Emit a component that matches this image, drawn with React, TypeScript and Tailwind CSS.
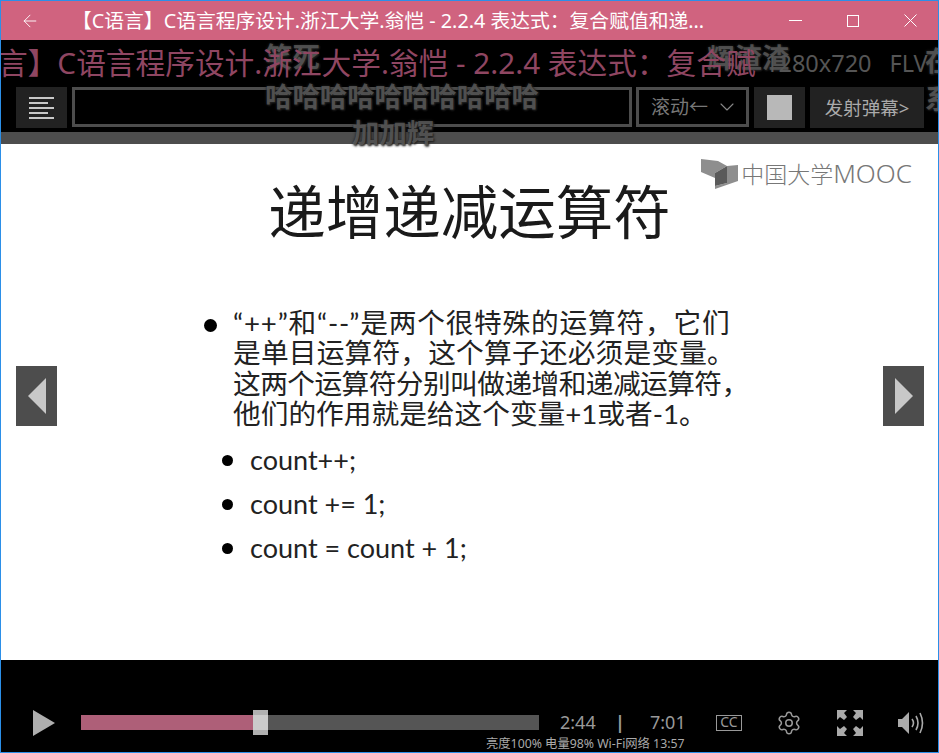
import React from 'react';
import { ArrowLeft, ChevronDown, Settings } from 'lucide-react';

const cjk = "font-['Noto_Sans','Noto_Sans_CJK_SC',sans-serif]";
const danmaku =
  "absolute whitespace-nowrap text-[27.4px] leading-none font-bold text-[#666]/70 [text-shadow:0_0_3px_#222,1px_1px_2px_#222]";

function Bullet({ children }: { children: React.ReactNode }) {
  return (
    <li className="flex items-center h-[44px]">
      <span className="w-[11px] h-[11px] rounded-full bg-black shrink-0 mr-[17px]" />
      <span className="font-['Lato',sans-serif] text-[27px] text-[#222]">{children}</span>
    </li>
  );
}

function SlideArrow({ right }: { right?: boolean }) {
  return (
    <div className={`absolute top-[222px] w-[41px] h-[60px] bg-[#4d4d4d] flex items-center justify-center ${right ? 'right-[14px]' : 'left-[15px]'}`}>
      <svg width="18" height="36" viewBox="0 0 18 36">
        <path d={right ? 'M0 0L18 18L0 36Z' : 'M18 0L0 18L18 36Z'} fill="#c8c8c8" />
      </svg>
    </div>
  );
}

export default function App() {
  return (
    <div className={`relative w-[939px] h-[753px] flex flex-col overflow-hidden border border-[#2b8fe8] bg-black ${cjk}`}>
      {/* Title bar */}
      <header className="h-[39px] shrink-0 flex items-center bg-[#d0637f] text-white">
        <ArrowLeft className="w-[20px] h-[20px] ml-[19px] mr-[32px]" strokeWidth={1.1} />
        <div className="flex-1 text-[19.8px] whitespace-nowrap">【C语言】C语言程序设计.浙江大学.翁恺 - 2.2.4 表达式：复合赋值和递...</div>
        <svg width="13" height="13" viewBox="0 0 13 13" className="mr-[45px]">
          <path d="M0 6.5H13" stroke="#fff" strokeWidth="1" />
        </svg>
        <svg width="12" height="12" viewBox="0 0 12 12" className="mr-[45px]">
          <rect x="0.5" y="0.5" width="11" height="11" fill="none" stroke="#fff" />
        </svg>
        <svg width="13" height="13" viewBox="0 0 13 13" className="mr-[21px]">
          <path d="M0.5 0.5L12.5 12.5M12.5 0.5L0.5 12.5" stroke="#fff" strokeWidth="1" />
        </svg>
      </header>

      {/* Danmaku panel */}
      <section className="h-[92px] shrink-0 flex flex-col">
        <div className="relative z-10 h-[47px] flex items-center overflow-hidden whitespace-nowrap text-[29.7px]">
          <span className="-ml-[3px] w-[767px] shrink-0 text-[#8f4662]">言】C语言程序设计.浙江大学.翁恺 - 2.2.4 表达式：复合赋</span>
          <span className="text-[#555] text-[23.5px]">1280x720</span>
          <span className="text-[#555] text-[23.5px] ml-[18px]">FLV</span>
        </div>
        <div className="h-[41px] flex gap-[5px] pl-[15px] pr-[14px]">
          <button className="w-[51px] bg-[#222] flex flex-col items-start justify-center gap-[3px] pl-[13px]">
            <span className="w-[25px] h-[2px] bg-[#c8c8c8]" />
            <span className="w-[19px] h-[2px] bg-[#c8c8c8]" />
            <span className="w-[25px] h-[2px] bg-[#c8c8c8]" />
            <span className="w-[19px] h-[2px] bg-[#c8c8c8]" />
            <span className="w-[25px] h-[2px] bg-[#c8c8c8]" />
          </button>
          <div className="w-[560px] h-[40px] border-[3px] border-[#4d4d4d]" />
          <div className="w-[113px] h-[40px] -ml-[1px] border-[3px] border-[#4d4d4d] flex items-center pl-[12px] text-[#777] text-[19px] whitespace-nowrap">
            滚动←
            <ChevronDown className="w-[24px] h-[24px] ml-[7px] text-[#888]" strokeWidth={1.1} />
          </div>
          <button className="w-[51px] bg-[#222] flex items-center justify-center">
            <span className="w-[25px] h-[25px] bg-[#b8b8b8]" />
          </button>
          <button className="w-[114px] bg-[#222] text-[#aaa] text-[18.5px] whitespace-nowrap">发射弹幕&gt;</button>
        </div>
      </section>
      <div className="h-[12px] shrink-0 bg-[#4d4d4d]" />

      {/* Slide */}
      <main className="relative flex-1 bg-white">
        <div className="flex justify-end items-start pt-[15px] pr-[26px] h-[46px]">
          <svg width="37" height="31" viewBox="0 0 37 31" className="mr-[3px]">
            <path d="M0 0L17 2L26 7L14 14V19L0 13Z" fill="#8e8e8e" />
            <path d="M26 7L37 6V22L14 30V27L26 24Z" fill="#8e8e8e" />
            <path d="M14 14L26 7V24L14 27Z" fill="#5a5a5a" />
          </svg>
          <span className="text-[23px] leading-[28px] font-light text-[#777] whitespace-nowrap">
            中国大学<span className="text-[26px]">MOOC</span>
          </span>
        </div>
        <h1 className="text-center text-[57.5px] leading-none font-normal text-[#1a1a1a] -mt-[6px]">递增递减运算符</h1>
        <div className="pl-[203px] mt-[66px]">
          <div className="flex text-[27.7px] leading-[30.5px] text-[#222] font-['Lato','Noto_Sans_CJK_SC',sans-serif]">
            <span className="w-[13px] h-[13px] rounded-full bg-black shrink-0 mt-[11px] mr-[16px]" />
            <p className="whitespace-nowrap">
              <span className="block tracking-[0.8px]">“++”和“--”是两个很特殊的运算符，它们</span>
              <span className="block tracking-[0.2px]">是单目运算符，这个算子还必须是变量。</span>
              <span className="block tracking-[-0.55px]">这两个运算符分别叫做递增和递减运算符，</span>
              <span className="block">他们的作用就是给这个变量+1或者-1。</span>
            </p>
          </div>
          <ul className="pl-[18px] mt-[9px]">
            <Bullet>count++;</Bullet>
            <Bullet>count += 1;</Bullet>
            <Bullet>count = count + 1;</Bullet>
          </ul>
        </div>
        <SlideArrow />
        <SlideArrow right />
      </main>

      {/* Player controls */}
      <footer className="relative h-[92px] shrink-0 flex items-center pt-[33px] text-[#999]">
        <svg width="22" height="26" viewBox="0 0 22 26" className="ml-[32px] mr-[26px]">
          <path d="M0 0L22 13L0 26Z" fill="#aeaeae" />
        </svg>
        <div className="relative w-[458px] h-[15px] bg-[#555] mr-[21px]">
          <div className="w-[172px] h-full bg-[#ae5f78]" />
          <div className="absolute left-[172px] -top-[5px] w-[15px] h-[25px] bg-[#b0b0b0] flex items-center">
            <div className="w-full h-[15px] bg-[#cbcbcb]" />
          </div>
        </div>
        <span className="text-[18px] w-[55px]">2:44</span>
        <span className="text-[18px] font-bold w-[35px]">|</span>
        <span className="text-[18px] w-[66px]">7:01</span>
        <span className="w-[26px] h-[16px] border-[1.5px] border-[#999] text-[14px] leading-[12px] text-center mr-[34px]">CC</span>
        <Settings className="w-[26px] h-[26px] mr-[35px]" strokeWidth={1.4} />
        <svg width="26" height="26" viewBox="0 0 26 26" className="mr-[35px]" fill="#aaa">
          <path d="M0 0H10L7 3L10 7L7 10L3 7L0 10ZM26 0H16L19 3L16 7L19 10L23 7L26 10ZM0 26H10L7 23L10 19L7 16L3 19L0 16ZM26 26H16L19 23L16 19L19 16L23 19L26 16Z" />
        </svg>
        <svg width="27" height="24" viewBox="0 0 27 24" fill="none">
          <path d="M0 8H4L11 1V23L4 16H0Z" fill="#aaa" />
          <path d="M14 8Q17 12 14 16M18 5Q22 12 18 19M22 2Q27 12 22 22" stroke="#aaa" strokeWidth="1.6" />
        </svg>
        <div className="absolute left-[485px] top-[76px] text-[12.3px] leading-[16px] text-[#aaa] whitespace-nowrap">亮度100% 电量98% Wi-Fi网络 13:57</div>
      </footer>

      {/* Danmaku overlay */}
      <div className={`${danmaku} left-[264px] top-[42px]`}>笑死</div>
      <div className={`${danmaku} left-[706px] top-[43px]`}>辉渣渣</div>
      <div className={`${danmaku} left-[924px] top-[46px]`}>在</div>
      <div className={`${danmaku} left-[264px] top-[82px]`}>哈哈哈哈哈哈哈哈哈哈</div>
      <div className={`${danmaku} left-[924px] top-[84px]`}>系</div>
      <div className={`${danmaku} left-[351px] top-[118px]`}>加加辉</div>
    </div>
  );
}
